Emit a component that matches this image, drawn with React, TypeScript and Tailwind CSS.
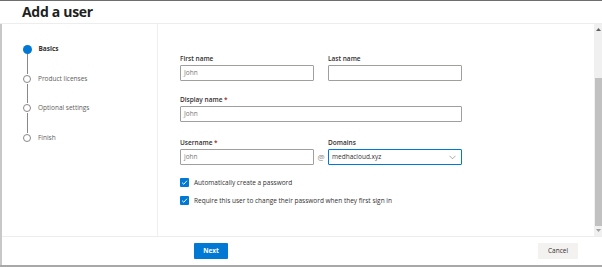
import React from "react";

function Step({ label, active }: { label: string; active?: boolean }) {
  return (
    <div className="flex items-center h-[8px]">
      {active ? (
        <div className="w-[9px] h-[9px] rounded-full bg-[#0078d4] ml-[-0.5px]" />
      ) : (
        <div className="w-[8px] h-[8px] rounded-full border border-[#8a8886] bg-white" />
      )}
      <span
        className={
          "ml-[7px] text-[6.5px] leading-[10px] whitespace-nowrap " +
          (active ? "font-bold text-[#323130]" : "text-[#605e5c]")
        }
      >
        {label}
      </span>
    </div>
  );
}

function Connector() {
  return (
    <div className="h-[21.5px] flex justify-start pl-[3.5px] py-[1px]">
      <div className="w-px h-full bg-[#8a8886]" />
    </div>
  );
}

function Label({ children, req }: { children: React.ReactNode; req?: boolean }) {
  return (
    <div className="h-[10px] leading-[10px] text-[6.5px] font-semibold text-[#323130] mb-[1px] whitespace-nowrap">
      {children}
      {req && <span className="text-[#a4262c]"> *</span>}
    </div>
  );
}

function Input({ value, w }: { value?: string; w: string }) {
  return (
    <div
      className={
        "h-[16px] border border-[#a19f9d] rounded-[1px] flex items-center px-[3px] text-[6.5px] text-[#797775] " + w
      }
    >
      {value}
    </div>
  );
}

function Check({ label }: { label: string }) {
  return (
    <div className="flex items-center h-[9px]">
      <div className="w-[9px] h-[9px] bg-[#0078d4] rounded-[1px] flex items-center justify-center">
        <svg width="7" height="7" viewBox="0 0 10 10">
          <path d="M1.5 5.2 L4 7.5 L8.5 2.5" fill="none" stroke="white" strokeWidth="1.3" />
        </svg>
      </div>
      <span className="ml-[5px] text-[6.5px] text-[#323130] whitespace-nowrap">{label}</span>
    </div>
  );
}

export default function App() {
  return (
    <div
      className="w-[602px] h-[267px] bg-white flex flex-col border-t border-[#6e6e6e] border-b-2 border-b-[#a8a8a8] overflow-hidden"
      style={{ fontFamily: "'Open Sans', 'Noto Sans', sans-serif" }}
    >
      <div className="h-[23px] shrink-0 flex items-center pl-[22px] border-b border-[#ededed]">
        <h1 className="text-[14px] font-bold text-[#201f1e] leading-none tracking-[-0.3px]">Add a user</h1>
      </div>
      <div className="flex-1 flex flex-col border-l-2 border-[#c8c8c8] min-h-0">
        <div className="flex-1 flex min-h-0">
          <nav className="w-[156px] shrink-0 border-r border-[#efefef] pl-[21px] pt-[21px]">
            <Step label="Basics" active />
            <Connector />
            <Step label="Product licenses" />
            <Connector />
            <Step label="Optional settings" />
            <Connector />
            <Step label="Finish" />
          </nav>
          <main className="flex-1 pl-[22px] pt-[30px]">
            <div className="flex gap-[14px]">
              <div>
                <Label>First name</Label>
                <Input value="John" w="w-[134px]" />
              </div>
              <div>
                <Label>Last name</Label>
                <Input w="w-[134px]" />
              </div>
            </div>
            <div className="mt-[14px]">
              <Label req>Display name</Label>
              <Input value="John" w="w-[282px]" />
            </div>
            <div className="mt-[16px] flex items-end">
              <div>
                <Label req>Username</Label>
                <Input value="john" w="w-[134px]" />
              </div>
              <div className="w-[14px] h-[16px] flex items-center justify-center text-[8px] text-[#8a8886]">@</div>
              <div>
                <Label>Domains</Label>
                <div className="w-[134px] h-[16px] border border-[#0078d4] rounded-[1px] flex items-center justify-between px-[3px] text-[6.5px] text-[#323130]">
                  <span>medhacloud.xyz</span>
                  <svg width="7" height="5" viewBox="0 0 8 5" className="mr-[2px]">
                    <path d="M0.5 0.5 L4 4 L7.5 0.5" fill="none" stroke="#8a8886" strokeWidth="0.8" />
                  </svg>
                </div>
              </div>
            </div>
            <div className="mt-[13px] flex flex-col gap-[9px]">
              <Check label="Automatically create a password" />
              <Check label="Require this user to change their password when they first sign in" />
            </div>
          </main>
          <div className="w-[8px] shrink-0 bg-[#f0f0f0] flex flex-col items-center">
            <div className="h-[8px] flex items-center justify-center mt-[1px]">
              <svg width="5" height="3" viewBox="0 0 5 3">
                <path d="M0 3 L2.5 0 L5 3 Z" fill="#606060" />
              </svg>
            </div>
            <div className="mt-[45px] w-[7px] h-[148px] bg-[#c1c1c1]" />
            <div className="h-[8px] flex items-center justify-center">
              <svg width="5" height="3" viewBox="0 0 5 3">
                <path d="M0 0 L5 0 L2.5 3 Z" fill="#a0a0a0" />
              </svg>
            </div>
          </div>
        </div>
        <div className="h-[29px] shrink-0 border-t border-[#ededed] flex items-center justify-between pl-[192px] pr-[24px]">
          <button className="w-[34px] h-[16px] bg-[#0078d4] text-white text-[6.5px] font-bold rounded-[1px] flex items-center justify-center">
            Next
          </button>
          <button className="w-[40px] h-[16px] bg-[#f3f2f1] text-[#323130] text-[6.5px] rounded-[1px] flex items-center justify-center">
            Cancel
          </button>
        </div>
      </div>
    </div>
  );
}
